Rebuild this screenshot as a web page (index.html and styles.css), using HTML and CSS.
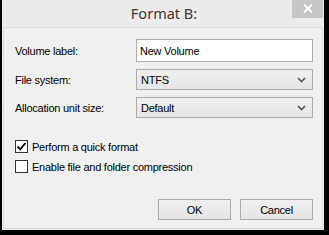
FILE: index.html
```html
<!DOCTYPE html>
<html>
<head>
<meta charset="utf-8">
<link rel="stylesheet" href="styles.css">
</head>
<body>
<div class="window">
  <div class="titlebar">
    <span></span>
    <span class="title">Format B:</span>
    <span class="close"><svg width="10" height="9" viewBox="0 0 10 9"><path d="M1 0.5 L9 8.5 M9 0.5 L1 8.5" stroke="#fff" stroke-width="1.8"/></svg></span>
  </div>
  <div class="panel">
    <div class="form">
      <label class="label">Volume label:</label>
      <div class="textbox">New Volume</div>
      <label class="label">File system:</label>
      <div class="select"><span>NTFS</span><svg width="9" height="6" viewBox="0 0 9 6"><path d="M1 1 L4.5 4.5 L8 1" fill="none" stroke="#555" stroke-width="1.6"/></svg></div>
      <label class="label">Allocation unit size:</label>
      <div class="select"><span>Default</span><svg width="9" height="6" viewBox="0 0 9 6"><path d="M1 1 L4.5 4.5 L8 1" fill="none" stroke="#555" stroke-width="1.6"/></svg></div>
    </div>
    <div class="checks">
      <div class="check"><span class="box"><svg width="11" height="11" viewBox="0 0 11 11"><path d="M1.5 5.5 L4.2 8.3 L9.5 2" fill="none" stroke="#111" stroke-width="1.9"/></svg></span><span>Perform a quick format</span></div>
      <div class="check"><span class="box"></span><span>Enable file and folder compression</span></div>
    </div>
    <div class="buttons">
      <div class="button">OK</div>
      <div class="button">Cancel</div>
    </div>
  </div>
</div>
</body>
</html>
```
FILE: styles.css
```css
html, body {
  margin: 0;
  padding: 0;
  background: #000;
  width: 329px;
  height: 235px;
  overflow: hidden;
}
.window {
  margin-left: 2px;
  width: 322px;
  height: 230px;
  background: #ebebeb;
  padding: 0 1px 1px 1px;
  box-sizing: border-box;
  display: flex;
  flex-direction: column;
  font-family: "Liberation Sans", Arial, sans-serif;
  font-size: 11px;
  letter-spacing: -0.25px;
  color: #000;
}
.titlebar {
  height: 27px;
  display: grid;
  grid-template-columns: 1fr auto 1fr;
  align-items: start;
}
.title {
  font-family: "Noto Sans", "Open Sans", sans-serif;
  font-size: 14.5px;
  letter-spacing: 0;
  color: #3a3a3a;
  line-height: 27px;
  margin-left: 2px;
}
.close {
  justify-self: end;
  width: 31px;
  height: 18px;
  background: #c6c6c6;
  display: flex;
  align-items: center;
  justify-content: center;
  padding-bottom: 2px;
  box-sizing: border-box;
}
.panel {
  flex: 1;
  background: #f0f0f0;
  border: 1px solid #dcdcdc;
  padding: 11px 9px 0 11px;
  display: flex;
  flex-direction: column;
}
.form {
  display: grid;
  grid-template-columns: 121px 177px;
  row-gap: 7px;
  align-items: center;
}
.label {
  padding-top: 1px;
}
.textbox {
  height: 23px;
  box-sizing: border-box;
  border: 1px solid #abadb3;
  background: #fff;
  padding: 0 3px;
  display: flex;
  align-items: center;
}
.select {
  height: 21px;
  box-sizing: border-box;
  border: 1px solid #acacac;
  background: linear-gradient(#f0f0f0, #e6e6e6);
  padding: 0 6px 0 4px;
  display: flex;
  align-items: center;
  justify-content: space-between;
}
.select + .label { margin-top: -1px; }
.checks {
  margin-top: 22px;
  display: flex;
  flex-direction: column;
  gap: 7px;
}
.check {
  display: flex;
  align-items: center;
  gap: 4px;
  height: 13px;
}
.box {
  width: 13px;
  height: 13px;
  box-sizing: border-box;
  border: 1px solid #333;
  background: #fff;
  display: flex;
  align-items: center;
  justify-content: center;
}
.buttons {
  margin-top: 26px;
  display: flex;
  justify-content: flex-end;
  gap: 9px;
}
.button {
  width: 73px;
  height: 21px;
  box-sizing: border-box;
  border: 1px solid #acacac;
  background: linear-gradient(#f0f0f0, #e5e5e5);
  display: flex;
  align-items: center;
  justify-content: center;
}
```
